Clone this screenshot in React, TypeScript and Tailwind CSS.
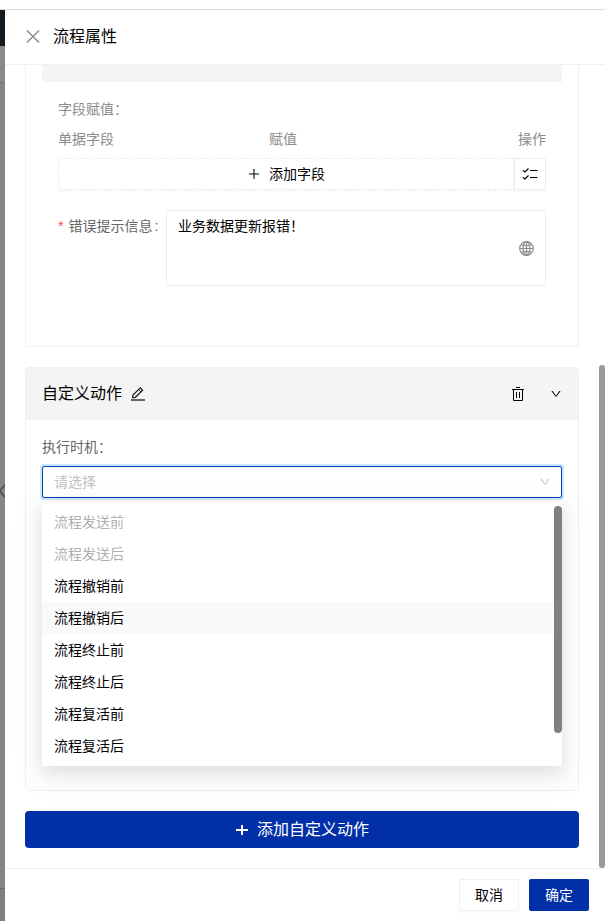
import { useState } from "react";
import { AiOutlineDown, AiOutlinePlus } from "react-icons/ai";

interface TimingOption {
  value: string;
  label: string;
  disabled?: boolean;
}

const TIMING_OPTIONS: TimingOption[] = [
  { value: "before-send", label: "流程发送前", disabled: true },
  { value: "after-send", label: "流程发送后", disabled: true },
  { value: "before-cancel", label: "流程撤销前" },
  { value: "after-cancel", label: "流程撤销后" },
  { value: "before-stop", label: "流程终止前" },
  { value: "after-stop", label: "流程终止后" },
  { value: "before-revive", label: "流程复活前" },
  { value: "after-revive", label: "流程复活后" },
];

const CloseIcon = () => (
  <svg width="16" height="16" viewBox="0 0 16 16" fill="none" stroke="currentColor">
    <path d="M2 1.5 14 13.5M14 1.5 2 13.5" strokeWidth="1.5" />
  </svg>
);

const PencilIcon = () => (
  <svg width="16" height="16" viewBox="0 0 16 16" fill="none" stroke="currentColor">
    <path d="M2.6 11.6 3 9 10.2 1.8 12.6 4.2 5.4 11.3Z" strokeWidth="1.3" />
    <path d="M8.6 3.6 10.8 5.800" />
    <path d="M1 14h14" stroke="#666666" strokeWidth="2" />
  </svg>
);

const ChecklistIcon = () => (
  <svg width="16" height="16" viewBox="0 0 16 16" fill="none" stroke="currentColor">
    <path d="M1 4.5 3 6 6.500 2.500M1 11.500l2 1.500 3.500-3.500" strokeWidth="1.2" />
    <path d="M8 4.5h7.5M8 11.5h7.5" strokeWidth="1.2" />
  </svg>
);

const TrashIcon = () => (
  <svg width="14" height="14" viewBox="0 0 14 14" fill="none" stroke="currentColor">
    <path d="M5 .5h4M1 2.5h12M2.5 2.5v11h9v-11M5.5 5v6M8.5 5v6" />
  </svg>
);

const GlobeIcon = () => (
  <svg width="15" height="15" viewBox="0 0 15 15" fill="none" stroke="currentColor" strokeWidth="1.2">
    <circle cx="7.5" cy="7.5" r="6.8" />
    <ellipse cx="7.5" cy="7.5" rx="3.5" ry="6.8" />
    <path d="M7.5 1v13M1 7.5h13M2.5 3.8C5 5 10 5 12.5 3.8M2.5 11.2c2.5-1.2 7.500-1.200 10 0" />
  </svg>
);

// 遮罩下露出的页面边缘
const PageEdge = () => (
  <div className="w-[5px] shrink-0 flex flex-col bg-[#858585] text-[#444444]">
    <div className="h-9 bg-[#131a20]" />
    <div className="h-9 bg-[#8a8a8a]" />
    <div className="h-px bg-[#757575]" />
    <div className="flex-1 flex items-center pt-[10px] overflow-hidden">
      <svg className="shrink-0" width="5" height="14" viewBox="0 0 5 14" fill="none" stroke="currentColor">
        <path d="M5.5 .5-.5 7l6 6.5" strokeWidth="1.4" />
      </svg>
    </div>
    <div className="h-[33px] border-t border-[#6c6c6c] bg-[#7e7e7e]" />
  </div>
);

// 业务数据更新卡片
const FieldUpdateCard = () => {
  const [message, setMessage] = useState("业务数据更新报错！");

  return (
    <section className="border border-t-0 border-[#f0f0f0] rounded-b px-4 pb-[60px]">
      <div className="h-[17px] bg-[#f4f4f4]" />
      <div className="px-4 pt-4">
        <p className="h-[22px] text-[#8c8c8c]">字段赋值：</p>
        <div className="mt-2 h-[22px] flex text-[#8c8c8c]">
          <span className="w-[211px]">单据字段</span>
          <span className="flex-1">赋值</span>
          <span>操作</span>
        </div>
        <div className="mt-2 flex h-8">
          <button
            type="button"
            className="flex-1 flex items-center justify-center gap-2 border border-dashed border-[#ececec] rounded-l-xs shadow-[0_2px_0_rgba(0,0,0,0.02)]"
          >
            <AiOutlinePlus className="size-[14px]" />
            添加字段
          </button>
          <button
            type="button"
            aria-label="批量选择"
            className="w-8 flex items-center justify-center border border-[#ececec] rounded-r-xs shadow-[0_2px_0_rgba(0,0,0,0.02)]"
          >
            <ChecklistIcon />
          </button>
        </div>
        <div className="mt-5 flex">
          <label htmlFor="error-message" className="w-[108px] h-8 flex items-center text-[#666666]">
            <span className="mr-[5px] text-[#ff4d4f]">*</span>
            错误提示信息
            <span className="ml-[2px]">:</span>
          </label>
          <div className="flex-1 relative">
            <textarea
              id="error-message"
              value={message}
              onChange={(e) => setMessage(e.target.value)}
              className="block w-full h-[76px] pl-[11px] pr-9 py-1 leading-[22px] border border-[#ececec] rounded-xs resize-none outline-none"
            />
            <span className="absolute right-3 inset-y-0 flex items-center text-[#8c8c8c]">
              <GlobeIcon />
            </span>
          </div>
        </div>
      </div>
    </section>
  );
};

// 执行时机下拉框
const TimingSelect = () => {
  const [value, setValue] = useState("");

  return (
    <div className="relative mt-2">
      <select
        id="timing"
        value={value}
        onChange={(e) => setValue(e.target.value)}
        className="block w-full h-8 px-[11px] appearance-none bg-white text-[#bfbfbf] border border-[#0048bd] rounded-xs shadow-[0_0_0_2px_#cde6fb] outline-none"
      >
        <option value="">请选择</option>
        {TIMING_OPTIONS.map((option) => (
          <option key={option.value} value={option.value} disabled={option.disabled}>
            {option.label}
          </option>
        ))}
      </select>
      <AiOutlineDown className="absolute right-[11px] top-[10px] size-3 text-[#bfbfbf] pointer-events-none" />

      {/* 下拉菜单 */}
      <div className="absolute inset-x-0 top-9 z-10 py-1 bg-white rounded-xs shadow-[0_6px_16px_0_rgba(0,0,0,0.08),0_9px_28px_8px_rgba(0,0,0,0.05)]">
        <ul role="listbox" aria-label="执行时机">
          {TIMING_OPTIONS.map((option) => (
            <li
              key={option.value}
              role="option"
              aria-selected={option.value === value}
              aria-disabled={option.disabled}
              onClick={() => !option.disabled && setValue(option.value)}
              className="h-8 px-3 leading-8 cursor-pointer aria-disabled:text-[#b0b0b0] aria-disabled:cursor-not-allowed nth-4:bg-[#f9f9f9]"
            >
              {option.label}
            </li>
          ))}
        </ul>
        <div className="absolute right-0 top-1 w-2 h-[227px] rounded-full bg-[#808080]" />
      </div>
    </div>
  );
};

const CustomActionCard = () => (
  <section className="mt-5 border border-[#f0f0f0] rounded">
    <header className="h-[52px] px-4 flex items-center bg-[#f4f4f4]">
      <h2 className="text-base">自定义动作</h2>
      <button type="button" aria-label="编辑名称" className="ml-2 text-[#222222]">
        <PencilIcon />
      </button>
      <button type="button" aria-label="删除" className="ml-auto">
        <TrashIcon />
      </button>
      <button type="button" aria-label="收起" className="ml-[25px]">
        <AiOutlineDown className="size-3" />
      </button>
    </header>
    <div className="min-h-[370px] px-4 pt-4">
      <label htmlFor="timing" className="block h-[22px] text-[#666666]">
        执行时机：
      </label>
      <TimingSelect />
    </div>
  </section>
);

export default function App() {
  return (
    <div className="min-h-screen flex flex-col bg-white text-black text-sm leading-[22px] font-['Liberation_Sans','Noto_Sans_CJK_SC',sans-serif]">
      <div className="h-[10px] border-b border-[#dedede]" />
      <div className="flex-1 flex">
        <PageEdge />
        <main className="flex-1 min-w-0 flex flex-col">
          <header className="h-[55px] px-5 flex items-center gap-3 border-b border-[#f0f0f0]">
            <button type="button" aria-label="关闭" className="text-[#8c8c8c]">
              <CloseIcon />
            </button>
            <h1 className="text-base">流程属性</h1>
          </header>

          <div className="flex-1 relative pl-5 pr-[26px] pb-5">
            <FieldUpdateCard />
            <CustomActionCard />
            <button
              type="button"
              className="mt-5 w-full h-[37px] flex items-center justify-center gap-2 rounded bg-[#002fa7] text-white text-base"
            >
              <svg width="14" height="14" viewBox="0 0 14 14" stroke="currentColor" strokeWidth="2">
                <path d="M7 2v10M1 7h12" />
              </svg>
              添加自定义动作
            </button>
            {/* 滚动条 */}
            <div className="absolute right-0 bottom-0 w-[6px] h-[503px] rounded-full bg-[#999999]" />
          </div>

          <footer className="h-[53px] px-4 flex items-center justify-end gap-[10px] border-t border-[#f0f0f0]">
            <button
              type="button"
              className="w-[60px] h-8 border border-[#f0f0f0] rounded-xs shadow-[0_2px_0_rgba(0,0,0,0.02)]"
            >
              取消
            </button>
            <button type="button" className="w-[60px] h-8 rounded-xs bg-[#002fa7] text-white">
              确定
            </button>
          </footer>
        </main>
      </div>
    </div>
  );
}
